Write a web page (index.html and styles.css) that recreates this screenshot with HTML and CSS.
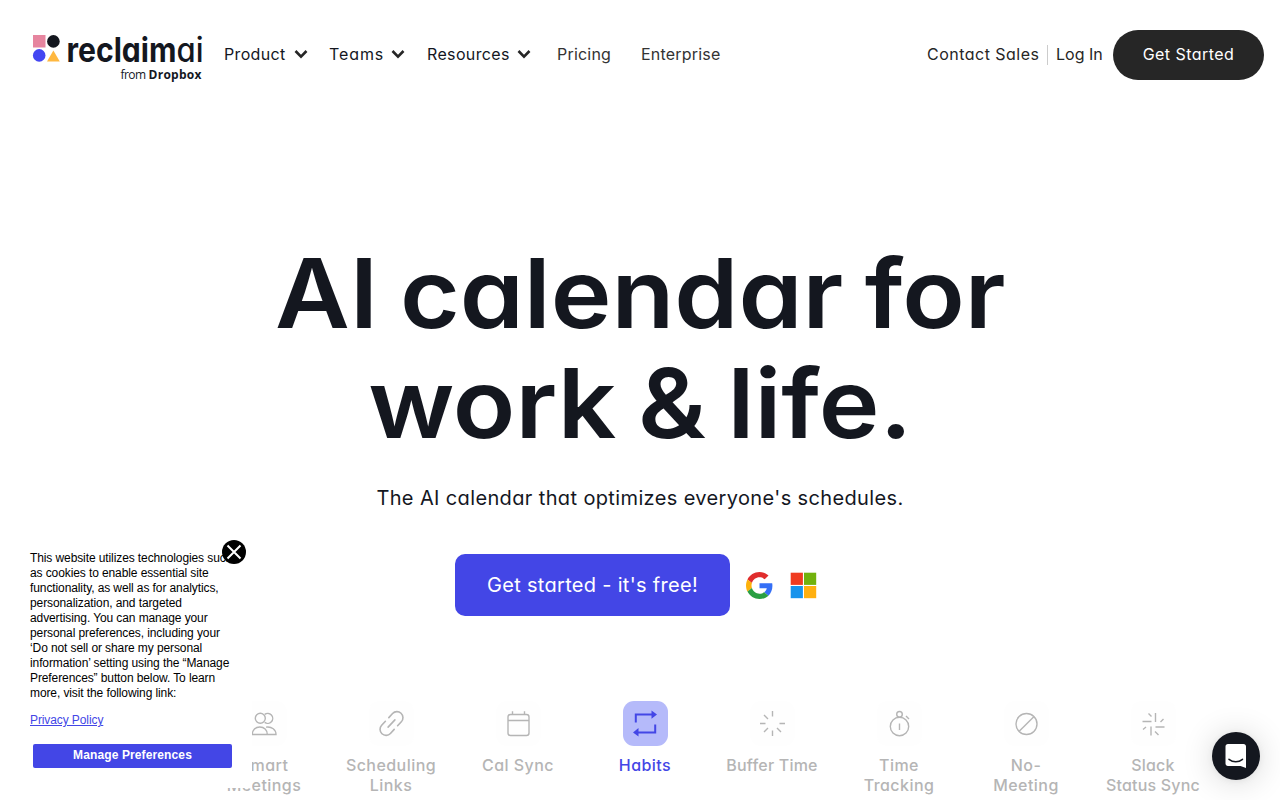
FILE: index.html
```html
<!DOCTYPE html>
<html lang="en">
<head>
<meta charset="utf-8">
<title>Reclaim.ai</title>
<link rel="stylesheet" href="styles.css">
</head>
<body>
<header class="nav">
  <svg class="logo" width="172" height="50" viewBox="0 0 172 50" role="img" aria-label="reclaimai from Dropbox">
    <rect x="1" y="3" width="12.5" height="12.5" fill="#e6859f"/>
    <circle cx="21.4" cy="9.4" r="6.3" fill="#14171f"/>
    <circle cx="7.2" cy="23.4" r="6.3" fill="#4346f2"/>
    <path d="M21.4 18.500 27.800 29.600H15z" fill="#ffb840"/>
    <text class="logo-bold" x="34.500" y="29.600" textLength="110" lengthAdjust="spacingAndGlyphs">reclaim</text>
    <text class="logo-light" x="144.500" y="29.600" textLength="27" lengthAdjust="spacingAndGlyphs">ai</text>
    <text class="logo-sub" x="88.500" y="46.500" textLength="25.500">from</text>
    <text class="logo-sub strong" x="116.500" y="46.500" textLength="53">Dropbox</text>
  </svg>
  <nav class="links">
    <a class="drop w-product">Product<svg class="chev" viewBox="0 0 14 10"><path d="M1.500 2 7 7.700 12.500 2"/></svg></a>
    <a class="drop w-teams"><span class="wide">Teams</span><svg class="chev" viewBox="0 0 14 10"><path d="M1.500 2 7 7.700 12.500 2"/></svg></a>
    <a class="drop w-resources">Resources<svg class="chev" viewBox="0 0 14 10"><path d="M1.500 2 7 7.700 12.500 2"/></svg></a>
    <a class="plain w-pricing">Pricing</a>
    <a class="plain">Enterprise</a>
  </nav>
  <div class="account">
    <a class="sales">Contact Sales</a>
    <a class="login">Log In</a>
    <a class="start">Get Started</a>
  </div>
</header>

<main class="hero">
  <h1><span class="line">AI calendar for</span><br><span class="line">work &amp; life.</span></h1>
  <p class="lead">The AI calendar that optimizes everyone's schedules.</p>
  <div class="cta">
    <a class="cta-button">Get started - it's free!</a>
    <svg class="google" width="27" height="27" viewBox="0 0 48 48">
      <path fill="#e02d2d" d="M24 9.5c3.54 0 6.71 1.22 9.21 3.6l6.85-6.85C35.9 2.38 30.47 0 24 0 14.62 0 6.51 5.38 2.56 13.22l7.98 6.19C12.43 13.72 17.74 9.5 24 9.5z"/>
      <path fill="#356ff6" d="M46.98 24.55c0-1.57-.15-3.09-.38-4.55H24v9.02h12.94c-.58 2.96-2.26 5.48-4.78 7.18l7.73 6c4.51-4.18 7.09-10.36 7.09-17.65z"/>
      <path fill="#fdb10b" d="M10.53 28.59c-.48-1.45-.76-2.99-.76-4.59s.27-3.14.76-4.59l-7.98-6.19C.92 16.46 0 20.12 0 24s.92 7.54 2.56 10.78l7.97-6.19z"/>
      <path fill="#2a9f43" d="M24 48c6.48 0 11.93-2.13 15.89-5.81l-7.73-6c-2.15 1.45-4.92 2.3-8.16 2.3-6.26 0-11.57-4.22-13.47-9.91l-7.98 6.19C6.51 42.62 14.62 48 24 48z"/>
    </svg>
    <svg class="microsoft" width="27" height="27" viewBox="0 0 27 27">
      <path fill="#f03b20" d="M.7.7h12.2v12.2H.7z"/><path fill="#72b20d" d="M14 .7h12.2v12.2H14z"/>
      <path fill="#1793ec" d="M.7 14h12.2v12.2H.7z"/><path fill="#ffb010" d="M14 14h12.2v12.2H14z"/>
    </svg>
  </div>
</main>

<section class="features">
  <div class="feature">
    <svg class="tile" viewBox="0 0 45 45"><circle cx="18.3" cy="17.3" r="5"/><path d="M22.7 13.4a5 5 0 1 1 0 8"/><path d="M10.3 33.5c0-4.5 3.2-7.5 7.5-7.5s7.5 3 7.5 7.5zM24 26.1c6-.8 10 2.6 10 7.4h-8.7"/></svg>
    <span>Smart<br>Meetings</span>
  </div>
  <div class="feature">
    <svg class="tile" viewBox="0 0 45 45"><path class="bold" transform="rotate(-47 22.5 22.500)" d="M20 16.500h-5.500a6 6 0 0 0 0 12H20M25 16.500h5.500a6 6 0 0 1 0 12H25M17.500 22.500h10"/></svg>
    <span>Scheduling<br>Links</span>
  </div>
  <div class="feature">
    <svg class="tile" viewBox="0 0 45 45"><rect x="12" y="13.500" width="21" height="21" rx="2.500"/><path d="M12 19.500h21M16.500 10.300v3M28.500 10.300v3"/></svg>
    <span>Cal Sync</span>
  </div>
  <div class="feature active">
    <svg class="tile" viewBox="0 0 45 45"><path d="M12.800 21.500v-8h17M32.200 23.500v8h-18"/><path class="solid" d="m28.500 9.500 5.500 4-5.500 4.300zM15.500 27l-5.500 4.500 5.500 4z"/></svg>
    <span>Habits</span>
  </div>
  <div class="feature">
    <svg class="tile" viewBox="0 0 45 45"><path d="M22.500 10v5.500M22.500 29.500V35M10 22.500h5.500M29.500 22.500H35M14 14l4 4M31 31l-4-4M14 31l4-4"/></svg>
    <span class="snug">Buffer Time</span>
  </div>
  <div class="feature">
    <svg class="tile" viewBox="0 0 45 45"><circle cx="22.500" cy="25.500" r="9.200"/><circle cx="22.500" cy="13.300" r="2.800"/><path d="M22.500 22.500v6.500M29 15l3 3"/></svg>
    <span>Time<br>Tracking</span>
  </div>
  <div class="feature">
    <svg class="tile" viewBox="0 0 45 45"><circle cx="22.500" cy="23" r="10.500"/><path d="m15.200 30.300 14.600-14.600"/></svg>
    <span>No-<br>Meeting</span>
  </div>
  <div class="feature">
    <svg class="tile" viewBox="0 0 45 45"><path d="M24.500 12v9M11.500 20.500h9M24.500 26h9M20 25.500v9M17.500 12.500l3 3M32.500 18l-3 3M12 28.500l3-2.500M24 30.500l3.500 3.500"/></svg>
    <span class="snug">Slack<br>Status Sync</span>
  </div>
</section>

<aside class="consent">
  <p>This website utilizes technologies such<br>as cookies to enable essential site<br>functionality, as well as for analytics,<br>personalization, and targeted<br>advertising. You can manage your<br>personal preferences, including your<br>‘Do not sell or share my personal<br>information’ setting using the “Manage<br>Preferences” button below. To learn<br>more, visit the following link:</p>
  <a class="policy">Privacy Policy</a>
  <button class="manage">Manage Preferences</button>
  <svg class="close" width="24" height="24" viewBox="0 0 24 24"><circle cx="12" cy="12" r="12"/><path d="m5.500 5.500 13 13M18.500 5.500l-13 13"/></svg>
</aside>

<div class="chat">
  <svg width="24" height="26" viewBox="0 0 24 26"><path fill="#fff" d="M4 1h15.500c1.500 0 2.500 1 2.500 2.500V25l-5.500-2H4c-1.500 0-2.500-1-2.500-2.500v-17C1.500 2 2.500 1 4 1z"/><path fill="none" stroke="#14171f" stroke-width="1.500" stroke-linecap="round" d="M5 16.300c4 3.200 9.500 3.200 13.500 0"/></svg>
</div>
</body>
</html>
```
FILE: styles.css
```css
* { box-sizing: border-box; }
body {
  margin: 0;
  height: 800px;
  overflow: hidden;
  background: #fff;
  color: #14171f;
  font-family: Inter, "Liberation Sans", sans-serif;
  font-feature-settings: "cv11" 1;
}
a { white-space: nowrap; }
.nav {
  display: flex;
  align-items: center;
  height: 109px;
  padding: 0 16px 0 32px;
  font-size: 16px;
}
.logo { flex: none; margin-top: 5px; overflow: visible; }
.logo text { fill: #14171f; }
.logo-bold { font-size: 34px; font-weight: 700; }
.logo-light { font-size: 34px; font-weight: 500; }
.logo-sub { font: 12px "Open Sans", sans-serif; }
.logo-sub.strong { font-weight: 700; }
.links { display: flex; align-items: center; margin: -1px 0 0 20px; }
.drop { display: flex; align-items: center; justify-content: space-between; letter-spacing: .35px; }
.wide { letter-spacing: .9px; }
.chev { width: 14px; height: 10px; fill: none; stroke: #262626; stroke-width: 2.6; }
.w-product { width: 84px; margin-right: 21px; }
.w-teams { width: 76px; margin-right: 22px; }
.w-resources { width: 104px; margin-right: 26px; }
.plain { color: #333; letter-spacing: .2px; }
.w-pricing { width: 84px; }
.account { display: flex; align-items: center; margin-left: auto; color: #262626; }
.sales { width: 121px; height: 20px; line-height: 19px; border-right: 1px solid #ccc; letter-spacing: .48px; }
.login { width: 65px; margin-top: -1px; padding-left: 8px; }
.start {
  width: 151px;
  height: 50px;
  border-radius: 25px;
  background: #262626;
  color: #fff;
  letter-spacing: .45px;
  line-height: 49px;
  text-align: center;
}
.hero { display: flex; flex-direction: column; align-items: center; height: 592px; padding-top: 129px; }
h1 {
  margin: 0;
  font-size: 96px;
  font-weight: 600;
  line-height: 110px;
  text-align: center;
  white-space: nowrap;
  word-spacing: -4px;
}
.line { display: inline-block; transform: scaleX(1.07); }
.lead { margin: 24px 0 0; font-size: 20px; letter-spacing: .37px; line-height: 32px; }
.cta { display: flex; align-items: center; margin: 40px 8px 0 0; }
.cta-button {
  width: 275px;
  height: 62px;
  border-radius: 10px;
  background: #4346e6;
  color: #fff;
  font-size: 20px;
  letter-spacing: .3px;
  line-height: 62px;
  text-align: center;
}
.google { margin-left: 16px; }
.microsoft { margin-left: 17px; }
.features { display: flex; width: 1018px; margin-left: 200.5px; }
.feature {
  display: flex;
  flex: 0 0 127px;
  flex-direction: column;
  align-items: center;
  color: #b5b5b5;
  font-size: 16px;
  font-weight: 500;
  letter-spacing: .45px;
  line-height: 20px;
  text-align: center;
}
.feature span { margin-top: 9px; }
.feature .snug { letter-spacing: .2px; }
.tile {
  width: 45px;
  height: 45px;
  border-radius: 11px;
  background: #fefefe;
  fill: none;
  stroke: #b5b5b5;
  stroke-width: 1.4;
}
.tile .bold { stroke-width: 1.6; stroke-linecap: round; }
.active { color: #4346e6; }
.active .tile { background: #b5bafa; stroke: #4346e6; stroke-width: 2; }
.active .solid { fill: #4346e6; stroke: none; }
.consent {
  position: absolute;
  left: 8px;
  top: 540px;
  width: 244px;
  height: 248px;
  padding: 11px 20px 0 22px;
  background: #fff;
  color: #000;
  font: 12px/15px "Liberation Sans", Arial, sans-serif;
  letter-spacing: -.1px;
}
.consent p { margin: 0 0 12px; white-space: nowrap; }
.policy { display: block; color: #4346e6; text-decoration: underline; }
.manage {
  display: block;
  width: 199px;
  height: 24px;
  margin: 16px 0 0 3px;
  padding: 0 0 2px;
  border: 0;
  border-radius: 2px;
  background: #4346e6;
  color: #fff;
  font: bold 12px "Liberation Sans", Arial, sans-serif;
  letter-spacing: .12px;
}
.close { position: absolute; top: 0; right: 6px; stroke: #fff; stroke-width: 2; }
.close circle { stroke: none; }
.chat {
  position: absolute;
  right: 20px;
  bottom: 20px;
  display: flex;
  align-items: center;
  justify-content: center;
  width: 48px;
  height: 48px;
  border-radius: 50%;
  background: #14171f;
  box-shadow: 0 1px 6px rgba(0, 0, 0, .06), 0 2px 32px rgba(0, 0, 0, .16);
}
```
